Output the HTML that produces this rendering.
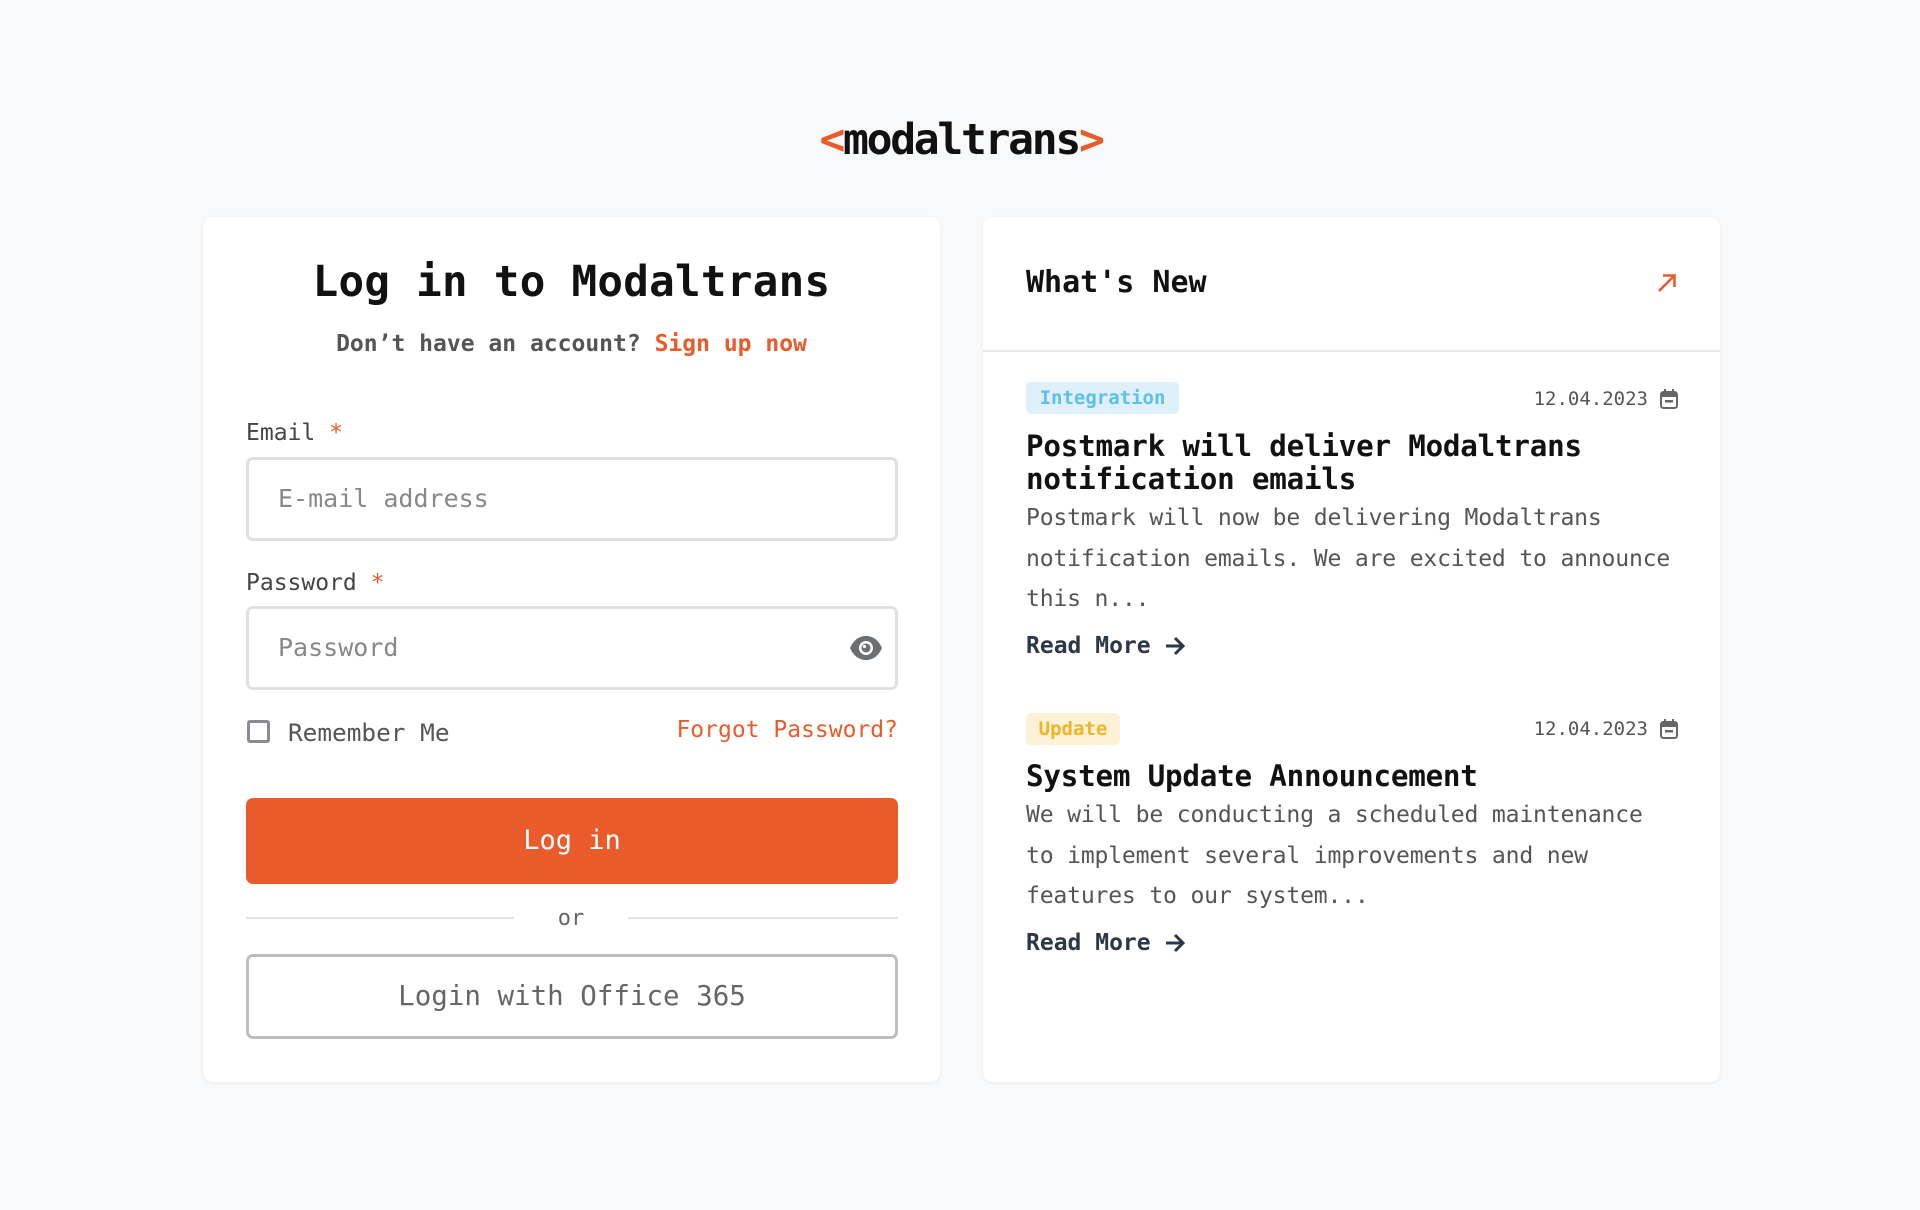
<!DOCTYPE html>
<html><head><meta charset="utf-8"><style>
*{margin:0;padding:0;box-sizing:border-box}
body{width:1920px;height:1210px;background:#f8f9fa;font-family:"DejaVu Sans Mono","Liberation Mono",monospace;position:relative;overflow:hidden}
.a{position:absolute;white-space:nowrap}
.card{position:absolute;top:217px;width:737px;height:865px;background:#fff;border-radius:10px;box-shadow:0 1px 4px rgba(0,0,0,.06)}
.inp{position:absolute;left:246px;width:652px;height:84px;border:3px solid #e0e0e0;border-radius:7px}
.ph{color:#888;font-size:25px}
.lab{font-size:23px;color:#444;height:30px;line-height:30px}
.star{color:#e95b2a}
.body{font-size:23.1px;color:#555;line-height:40.5px;letter-spacing:-.2px}
.h{font-size:29.2px;font-weight:bold;color:#111;line-height:33px;letter-spacing:-.2px}
.rm{font-size:23px;font-weight:bold;color:#2d3748;height:30px;line-height:30px}
.date{font-size:19px;color:#555;height:26px;line-height:26px}
</style></head><body>

<div class="a" style="left:0;width:1922px;text-align:center;top:114px;height:52px;line-height:52px;font-size:43px;font-weight:bold;letter-spacing:-2.3px;color:#111"><span style="color:#e95b2a">&lt;</span>modaltrans<span style="color:#e95b2a">&gt;</span></div>

<div class="card" style="left:203px"></div>
<div class="card" style="left:983px"></div>

<div class="a" style="left:203px;width:737px;text-align:center;top:257px;height:52px;line-height:52px;font-size:42.5px;font-weight:bold;color:#111;letter-spacing:.3px">Log in to Modaltrans</div>
<div class="a" style="left:203px;width:737px;text-align:center;top:329px;height:30px;line-height:30px;font-size:23px;font-weight:bold;color:#555">Don’t have an account? <span style="color:#e95b2a">Sign up now</span></div>

<div class="a lab" style="left:246px;top:418px">Email <span class="star">*</span></div>
<div class="inp" style="top:457px"></div>
<div class="a ph" style="left:278px;top:483px;height:32px;line-height:32px">E-mail address</div>

<div class="a lab" style="left:246px;top:568px">Password <span class="star">*</span></div>
<div class="inp" style="top:606px"></div>
<div class="a ph" style="left:278px;top:632px;height:32px;line-height:32px">Password</div>
<svg class="a" style="left:849px;top:635px" width="34" height="26" viewBox="0 0 34 26"><path d="M1 13C5 4 11 1 17 1s12 3 16 12c-4 9-10 12-16 12S5 22 1 13z" fill="#6b7075"/><circle cx="17" cy="13" r="7" fill="#fff"/><circle cx="17" cy="13" r="4.5" fill="#6b7075"/><circle cx="15.5" cy="11.5" r="1.6" fill="#fff"/></svg>

<div class="a" style="left:247px;top:720px;width:23px;height:23px;border:3px solid #8a8a96;border-radius:3px"></div>
<div class="a lab" style="left:288px;top:718px;color:#555;font-size:24.4px">Remember Me</div>
<div class="a lab" style="right:1022px;top:715px;color:#e95b2a">Forgot Password?</div>

<div class="a" style="left:246px;top:798px;width:652px;height:86px;background:#e95b2a;border-radius:7px;color:#fff;font-size:27px;text-align:center;line-height:86px">Log in</div>

<div class="a" style="left:246px;top:917px;width:268px;height:2px;background:#e3e3e3"></div>
<div class="a" style="left:628px;top:917px;width:270px;height:2px;background:#e3e3e3"></div>
<div class="a" style="left:514px;width:114px;text-align:center;top:904px;height:30px;line-height:30px;font-size:22px;color:#666">or</div>

<div class="a" style="left:246px;top:954px;width:652px;height:85px;border:3px solid #bdbdbd;border-radius:7px;color:#666;font-size:27.5px;text-align:center;line-height:79px">Login with Office 365</div>

<!-- right card -->
<div class="a" style="left:1026px;top:265px;height:36px;line-height:36px;font-size:30px;font-weight:bold;color:#111">What's New</div>
<svg class="a" style="left:1656px;top:272px" width="22" height="22" viewBox="0 0 22 22"><path d="M3 19L18 4M7 3.5h11.5V15" fill="none" stroke="#e95b2a" stroke-width="2.6"/></svg>
<div class="a" style="left:983px;top:350px;width:737px;height:2px;background:#e5e7eb"></div>

<div class="a" style="left:1026px;top:382px;width:153px;height:32px;background:#dff0fb;border-radius:5px;color:#5bc0eb;font-size:19px;font-weight:bold;text-align:center;line-height:32px">Integration</div>
<div class="a date" style="right:272px;top:386px">12.04.2023</div>
<svg class="a" style="left:1660px;top:389px" width="18" height="20" viewBox="0 0 18 20"><rect x="1" y="3" width="16" height="16" rx="2.5" fill="none" stroke="#666" stroke-width="2"/><rect x="1" y="3" width="16" height="5" fill="#666"/><rect x="4" y="0" width="2" height="5" fill="#666"/><rect x="12" y="0" width="2" height="5" fill="#666"/><rect x="5" y="11" width="8" height="2.5" fill="#666"/></svg>
<div class="a h" style="left:1026px;top:430px">Postmark will deliver Modaltrans<br>notification emails</div>
<div class="a body" style="left:1026px;top:498px">Postmark will now be delivering Modaltrans<br>notification emails. We are excited to announce<br>this n...</div>
<div class="a rm" style="left:1026px;top:631px">Read More <svg width="22" height="20" viewBox="0 0 22 20" style="vertical-align:-3px"><path d="M2 10h17M11 2l8 8-8 8" fill="none" stroke="#2d3748" stroke-width="3"/></svg></div>

<div class="a" style="left:1026px;top:713px;width:94px;height:32px;background:#fdf1d6;border-radius:5px;color:#f0b429;font-size:19px;font-weight:bold;text-align:center;line-height:32px">Update</div>
<div class="a date" style="right:272px;top:716px">12.04.2023</div>
<svg class="a" style="left:1660px;top:719px" width="18" height="20" viewBox="0 0 18 20"><rect x="1" y="3" width="16" height="16" rx="2.5" fill="none" stroke="#666" stroke-width="2"/><rect x="1" y="3" width="16" height="5" fill="#666"/><rect x="4" y="0" width="2" height="5" fill="#666"/><rect x="12" y="0" width="2" height="5" fill="#666"/><rect x="5" y="11" width="8" height="2.5" fill="#666"/></svg>
<div class="a h" style="left:1026px;top:760px">System Update Announcement</div>
<div class="a body" style="left:1026px;top:795px">We will be conducting a scheduled maintenance<br>to implement several improvements and new<br>features to our system...</div>
<div class="a rm" style="left:1026px;top:928px">Read More <svg width="22" height="20" viewBox="0 0 22 20" style="vertical-align:-3px"><path d="M2 10h17M11 2l8 8-8 8" fill="none" stroke="#2d3748" stroke-width="3"/></svg></div>

</body></html>
